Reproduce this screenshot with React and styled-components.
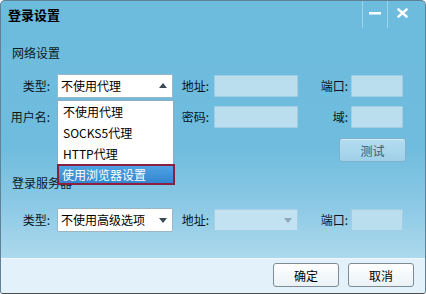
import React from "react"
import styled, { createGlobalStyle } from "styled-components"

const GlobalStyle = createGlobalStyle`
  html, body {
    margin: 0;
    padding: 0;
    overflow: hidden;
    background: #ffffff;
  }
  body {
    font-family: "Noto Sans CJK SC", "Liberation Sans", sans-serif;
    font-size: 12px;
    color: #000;
  }
`

const Window = styled.div`
  width: 426px;
  height: 294px;
  box-sizing: border-box;
  border: 1px solid #5f8297;
  border-bottom-color: #4d4d4d;
  border-radius: 5px 5px 3px 3px;
  overflow: hidden;
  display: flex;
  flex-direction: column;
  background: linear-gradient(
    to bottom,
    #6dbbdd 0%,
    #6fbcde 50%,
    #8cc9e5 70%,
    #acd9ed 88%
  );
`

const TitleBar = styled.div`
  height: 27px;
  flex-shrink: 0;
  display: flex;
  align-items: center;
  justify-content: space-between;
  padding-left: 7px;
`

const Title = styled.div`
  font-size: 13px;
  font-weight: bold;
  line-height: 16px;
`

const TitleButtons = styled.div`
  display: flex;
  align-self: stretch;
  margin-right: 9px;
`

const TitleButton = styled.div`
  width: ${(p) => p.$w}px;
  height: 27px;
  display: flex;
  align-items: center;
  justify-content: center;
  border-left: 1px solid rgba(180, 222, 240, 0.7);
  box-sizing: border-box;
  padding-bottom: 4px;
`

const Body = styled.div`
  flex: 1;
  display: flex;
  flex-direction: column;
  padding-top: 17px;
`

const SectionTitle = styled.div`
  padding-left: 11px;
  line-height: 16px;
  color: #0c1a22;
  margin-top: ${(p) => p.$top || 0}px;
`

const FieldGrid = styled.div`
  display: grid;
  grid-template-columns: 56px 116px 41px 84px 53px 52px;
  grid-auto-rows: 24px;
  row-gap: 7px;
  align-items: center;
  margin-top: ${(p) => p.$top}px;
`

const Label = styled.div`
  text-align: right;
  padding-right: ${(p) => p.$gap}px;
  line-height: 16px;
  white-space: nowrap;
  color: #0a141a;
`

const TextInput = styled.div`
  height: 22px;
  box-sizing: border-box;
  background: #bbdeef;
  border: 1px solid #a2cde2;
  border-radius: 1px;
`

const SelectWrap = styled.div`
  position: relative;
  height: 24px;
`

const SelectBox = styled.div`
  height: ${(p) => (p.$disabled ? 22 : 24)}px;
  margin-top: ${(p) => (p.$disabled ? 1 : 0)}px;
  box-sizing: border-box;
  display: flex;
  align-items: center;
  justify-content: space-between;
  padding: 0 5px 0 3px;
  background: ${(p) => (p.$disabled ? "#c2e2f2" : "#ffffff")};
  border: 1px solid ${(p) => (p.$disabled ? "#a6d0e4" : "#9ab7c8")};
  border-radius: 1px;
  line-height: 16px;
  white-space: nowrap;
`

const Arrow = styled.span`
  width: 0;
  height: 0;
  border-left: 4px solid transparent;
  border-right: 4px solid transparent;
  ${(p) =>
    p.$up
      ? `border-bottom: 5px solid #3c4a54; margin-top: -1px;`
      : `border-top: 5px solid ${p.$muted ? "#8fa7b5" : "#3c4a54"}; margin-top: 1px;`}
`

const DropList = styled.div`
  position: absolute;
  left: 0;
  top: 26px;
  width: 117px;
  box-sizing: border-box;
  background: #ffffff;
  border: 1px solid #90abbb;
  border-bottom: none;
  z-index: 2;
`

const DropItem = styled.div`
  height: 21px;
  box-sizing: border-box;
  display: flex;
  align-items: center;
  padding-left: ${(p) => (p.$active ? 3 : 5)}px;
  white-space: nowrap;
  color: ${(p) => (p.$active ? "#ffffff" : "#000000")};
  background: ${(p) =>
    p.$active ? "linear-gradient(to bottom, #4fa3e2, #3485d0)" : "transparent"};
  border: ${(p) => (p.$active ? "2px solid #8a1f40" : "none")};
  margin: ${(p) => (p.$active ? "0 -2px 0 -1px" : "0")};
`

const TestRow = styled.div`
  display: flex;
  justify-content: flex-end;
  padding-right: 19px;
  margin-top: 9px;
`

const TestButton = styled.div`
  width: 67px;
  height: 24px;
  box-sizing: border-box;
  display: flex;
  align-items: center;
  justify-content: center;
  border: 1px solid #7fb1cd;
  border-radius: 3px;
  background: linear-gradient(to bottom, #b4ddf0, #9fd0e8);
  color: #3a5a6e;
  box-shadow: inset 0 1px 0 rgba(255, 255, 255, 0.4);
`

const Footer = styled.div`
  height: 35px;
  flex-shrink: 0;
  box-sizing: border-box;
  display: flex;
  justify-content: flex-end;
  align-items: flex-start;
  gap: 9px;
  padding: 4px 11px 0 0;
  background: #e3f2fa;
  border-top: 1px solid #eef8fd;
`

const FooterButton = styled.div`
  width: 66px;
  height: 24px;
  box-sizing: border-box;
  display: flex;
  align-items: center;
  justify-content: center;
  border: 1px solid #7c8c96;
  border-radius: 3px;
  background: linear-gradient(to bottom, #ffffff, #eaf2f6);
  color: #000;
`

const proxyOptions = ["不使用代理", "SOCKS5代理", "HTTP代理", "使用浏览器设置"]

export default function App() {
  return (
    <>
      <GlobalStyle />
      <Window>
        <TitleBar>
          <Title>登录设置</Title>
          <TitleButtons>
            <TitleButton $w={25}>
              <svg width="12" height="4" viewBox="0 0 12 4">
                <rect x="0" y="1" width="12" height="2.5" fill="#ffffff" />
              </svg>
            </TitleButton>
            <TitleButton $w={29}>
              <svg width="11" height="10" viewBox="0 0 11 10">
                <path
                  d="M1.5 1.5 L9.5 8.5 M9.5 1.5 L1.5 8.5"
                  stroke="#ffffff"
                  strokeWidth="2.4"
                  strokeLinecap="square"
                />
              </svg>
            </TitleButton>
          </TitleButtons>
        </TitleBar>

        <Body>
          <SectionTitle>网络设置</SectionTitle>
          <FieldGrid $top={13}>
            <Label $gap={7}>类型:</Label>
            <SelectWrap>
              <SelectBox>
                不使用代理
                <Arrow $up />
              </SelectBox>
              <DropList>
                {proxyOptions.map((opt, i) => (
                  <DropItem key={opt} $active={i === proxyOptions.length - 1}>
                    {opt}
                  </DropItem>
                ))}
              </DropList>
            </SelectWrap>
            <Label $gap={5}>地址:</Label>
            <TextInput />
            <Label $gap={3}>端口:</Label>
            <TextInput />

            <Label $gap={7}>用户名:</Label>
            <TextInput />
            <Label $gap={5}>密码:</Label>
            <TextInput />
            <Label $gap={3}>域:</Label>
            <TextInput />
          </FieldGrid>

          <TestRow>
            <TestButton>测试</TestButton>
          </TestRow>

          <SectionTitle $top={13}>登录服务器</SectionTitle>
          <FieldGrid $top={17}>
            <Label $gap={7}>类型:</Label>
            <SelectWrap>
              <SelectBox>
                不使用高级选项
                <Arrow />
              </SelectBox>
            </SelectWrap>
            <Label $gap={5}>地址:</Label>
            <SelectWrap>
              <SelectBox $disabled>
                <span />
                <Arrow $muted />
              </SelectBox>
            </SelectWrap>
            <Label $gap={3}>端口:</Label>
            <TextInput />
          </FieldGrid>
        </Body>

        <Footer>
          <FooterButton>确定</FooterButton>
          <FooterButton>取消</FooterButton>
        </Footer>
      </Window>
    </>
  )
}
